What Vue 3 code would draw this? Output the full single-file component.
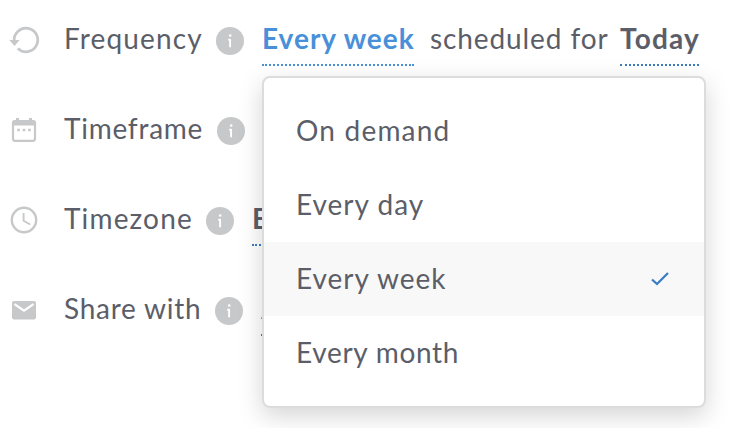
<script setup>
import { ref } from 'vue'

const rows = [
	{ id: 'frequency', label: 'Frequency' },
	{ id: 'timeframe', label: 'Timeframe' },
	{ id: 'timezone', label: 'Timezone', value: 'E' },
	{ id: 'share', label: 'Share with', value: 'A' }
]

const options = [
	{ id: 'demand', text: 'On demand' },
	{ id: 'day', text: 'Every day' },
	{ id: 'week', text: 'Every week' },
	{ id: 'month', text: 'Every month' }
]

const selected = ref('week')
</script>

<template>
	<div class="schedule">
		<div v-for="row in rows" :key="row.id" class="row" :class="row.id">
			<svg class="icon" width="32" height="32" viewBox="0 0 32 32">
				<g v-if="row.id === 'frequency'">
					<path d="M6.2 17A11.8 11.8 0 1 1 9.8 24.5" fill="none" stroke="#c7c8ca" stroke-width="2.7" />
					<path d="M1.2 16H11.6L6.6 21.9Z" fill="#c7c8ca" />
				</g>
				<g v-else-if="row.id === 'timeframe'">
					<rect x="5" y="7.2" width="22" height="19.6" rx="2" fill="none" stroke="#c7c8ca" stroke-width="2.2" />
					<path d="M4 11.5V8.5q0-2 2-2h20q2 0 2 2v3zM8 4h3v4H8zM21 4h3v4h-3z" fill="#c7c8ca" />
					<path d="M9.2 14.7h2.6v2.6H9.2zM14.7 14.7h2.6v2.6h-2.6zM20.2 14.7h2.6v2.6h-2.6z" fill="#c7c8ca" />
				</g>
				<g v-else-if="row.id === 'timezone'" fill="none" stroke="#c7c8ca">
					<circle cx="16" cy="16" r="12.2" stroke-width="2.4" />
					<path d="M15.6 9V16.8L22.2 20.5" stroke-width="1.9" />
				</g>
				<g v-else>
					<rect x="4" y="7" width="24" height="18.5" rx="2" fill="#c7c8ca" />
					<path d="M6.5 10.2L16 16.7L25.5 10.2" fill="none" stroke="#fff" stroke-width="2.2" />
				</g>
			</svg>
			<span class="label">{{ row.label }}</span>
			<svg class="info" width="28" height="28" viewBox="0 0 28 28">
				<circle cx="14" cy="14" r="14" fill="#c7c8ca" />
				<circle cx="14.2" cy="8.6" r="1.25" fill="#fff" />
				<path d="M13 12.7H14.1V19.6" fill="none" stroke="#fff" stroke-width="1.9" stroke-linecap="round" stroke-linejoin="round" />
			</svg>
			<template v-if="row.id === 'frequency'">
				<span class="value active">Every week</span>
				<span class="between">scheduled for</span>
				<span class="value today">Today</span>
			</template>
			<span v-else-if="row.value" class="value">{{ row.value }}</span>
		</div>

		<!-- Frequency menu -->
		<ul class="menu">
			<li
				v-for="option in options"
				:key="option.id"
				:class="[option.id, { selected: option.id === selected }]"
				@click="selected = option.id"
			>
				<span>{{ option.text }}</span>
				<svg v-if="option.id === selected" width="20" height="16" viewBox="0 0 20 16">
					<path d="M2 8.5L7 13L18 2" fill="none" stroke="#3b7cc4" stroke-width="2.3" />
				</svg>
			</li>
		</ul>
	</div>
</template>

<style>
body {
	background-color: white;
	overflow: hidden;
}
</style>

<style scoped>
.schedule {
	position: relative;
	box-sizing: border-box;
	width: 742px;
	height: 428px;
	padding-top: 14px;
	overflow: hidden;
	font-family: Lato, "Liberation Sans", sans-serif;
	font-size: 28px;
	color: #5b5e68;
	white-space: nowrap;
}

.row {
	display: flex;
	align-items: flex-start;
	height: 90px;
	line-height: 48px;
}

.icon {
	flex: none;
	margin: 10px 0 0 8px;
}

.label {
	flex: none;
	width: 152px;
	margin-left: 24px;
	letter-spacing: 1.15px;
}

.timeframe .label {
	width: 153px;
	letter-spacing: 0.75px;
}

.timezone .label {
	width: 142px;
}

.share .label {
	width: 151px;
	letter-spacing: 0.75px;
}

.info {
	flex: none;
	margin-top: 13px;
}

.value {
	box-sizing: border-box;
	height: 52px;
	margin-left: 18px;
	border-bottom: 2px dotted #3b7cc4;
	font-weight: bold;
}

.active {
	width: 152px;
	border-color: #4a90d9;
	color: #4a90d9;
	letter-spacing: 1px;
}

.between {
	width: 178px;
	margin-left: 16px;
	letter-spacing: 0.9px;
}

.today {
	width: 79px;
	margin-left: 12px;
	letter-spacing: 1.2px;
}

.share .value {
	font-weight: normal;
}

.timezone .value {
	width: 100px;
}

.menu {
	position: absolute;
	left: 262px;
	top: 76px;
	box-sizing: border-box;
	width: 444px;
	height: 332px;
	margin: 0;
	padding: 16px 0;
	border: 2px solid #dcdcdc;
	border-radius: 8px;
	background-color: white;
	box-shadow: 0 8px 24px rgba(0, 0, 0, 0.17);
	list-style: none;
}

.menu li {
	display: flex;
	align-items: center;
	justify-content: space-between;
	height: 74px;
	padding: 0 34px 0 32px;
	letter-spacing: 1px;
	cursor: pointer;
}

.menu li span {
	padding-bottom: 3px;
}

.menu .demand {
	letter-spacing: 1.2px;
}

.menu .month {
	letter-spacing: 0.7px;
}

.menu .selected {
	background-color: #f8f8f8;
}
</style>
